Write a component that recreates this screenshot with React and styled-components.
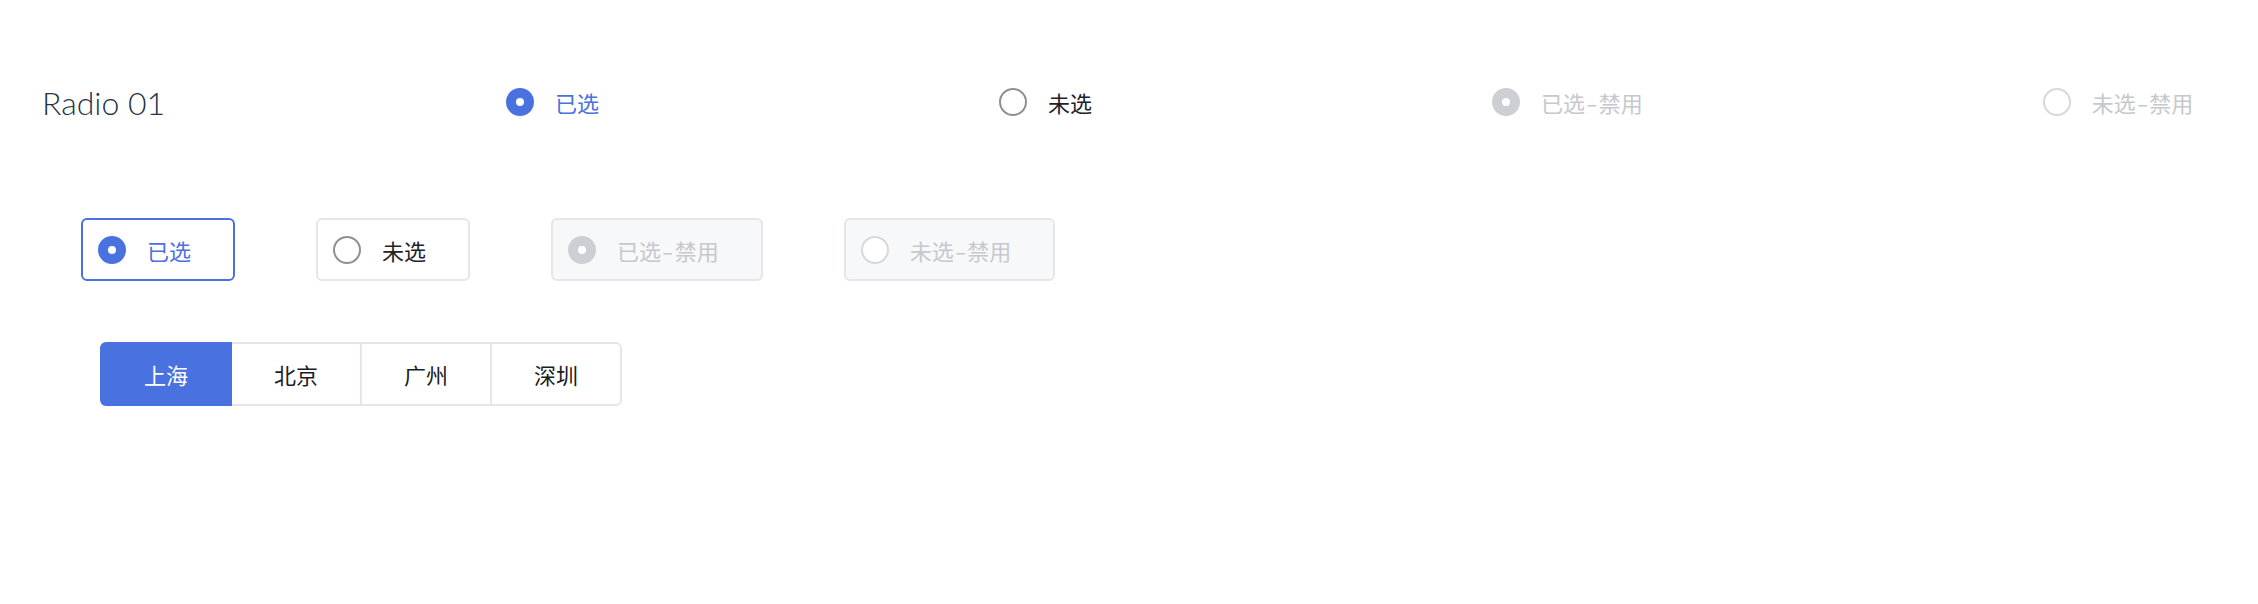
import { useState } from 'react';
import styled, { createGlobalStyle, css } from 'styled-components';

const BLUE = '#4a71e0';

const GlobalStyle = createGlobalStyle`
  body {
    margin: 0;
    background: #ffffff;
    font-family: Lato, "Noto Sans CJK SC", sans-serif;
  }
`;

const Page = styled.div`
  display: flex;
  flex-direction: column;
  align-items: flex-start;
  padding: 72px 0 0 42px;
`;

const Header = styled.div`
  display: flex;
  align-items: center;
  height: 60px;
`;

const Title = styled.h1`
  width: 464px;
  margin: 0;
  font-family: Lato, sans-serif;
  font-weight: 300;
  font-size: 32px;
  color: #24334a;
`;

const States = styled.div`
  display: flex;
  align-items: center;
  gap: 400px;
`;

const Option = styled.label`
  display: flex;
  align-items: center;
  gap: 21px;
  font-size: 22px;
  font-family: "Noto Sans CJK SC", sans-serif;
  color: ${({ $checked, $disabled }) => ($disabled ? '#c6c8cd' : $checked ? BLUE : '#1f2329')};
  cursor: ${({ $disabled }) => ($disabled ? 'not-allowed' : 'pointer')};
`;

// the hyphen in the reference font is wider than Noto's
const Sep = styled.span`
  display: inline-block;
  margin: 0 3px;
  transform: scaleX(1.5);
`;

const Dot = styled.span`
  box-sizing: border-box;
  flex: none;
  width: 28px;
  height: 28px;
  border-radius: 50%;
  background: #fff;
  border: 2px solid ${({ $disabled }) => ($disabled ? '#d6d8dc' : '#8e9096')};

  ${({ $checked, $disabled }) =>
    $checked &&
    css`
      border: 10px solid ${$disabled ? '#cdcfd4' : BLUE};
    `}
`;

const BoxGroup = styled.div`
  display: flex;
  gap: 81px;
  margin: 86px 0 0 39px;
`;

const BoxOption = styled(Option)`
  box-sizing: border-box;
  height: 63px;
  padding: 0 42px 0 15px;
  border-radius: 6px;
  border: 2px solid ${({ $checked, $disabled }) => ($checked && !$disabled ? BLUE : '#e4e6eb')};
  background: ${({ $disabled }) => ($disabled ? '#f7f8fa' : '#fff')};
`;

const Segmented = styled.div`
  display: flex;
  margin: 61px 0 0 58px;
`;

const Segment = styled.button`
  box-sizing: border-box;
  width: 132px;
  height: 64px;
  margin-left: -2px;
  padding: 0;
  border: 2px solid ${({ $active }) => ($active ? BLUE : '#e4e6eb')};
  background: ${({ $active }) => ($active ? BLUE : '#fff')};
  color: ${({ $active }) => ($active ? '#fff' : '#1a1d23')};
  font-family: "Noto Sans CJK SC", sans-serif;
  font-size: 22px;
  cursor: pointer;
  position: relative;
  z-index: ${({ $active }) => ($active ? 1 : 0)};

  &:first-child {
    margin-left: 0;
    border-radius: 6px 0 0 6px;
  }

  &:last-child {
    border-radius: 0 6px 6px 0;
  }
`;

const states = [
  { label: '已选', checked: true, disabled: false },
  { label: '未选', checked: false, disabled: false },
  { label: '已选-禁用', checked: true, disabled: true },
  { label: '未选-禁用', checked: false, disabled: true },
];

const cities = ['上海', '北京', '广州', '深圳'];

const Label = ({ text }) => {
  const [main, rest] = text.split('-');
  return (
    <span>
      {main}
      {rest && (
        <>
          <Sep>-</Sep>
          {rest}
        </>
      )}
    </span>
  );
};

export default function App() {
  const [city, setCity] = useState('上海');

  return (
    <>
      <GlobalStyle />
      <Page>
        <Header>
          <Title>Radio 01</Title>
          <States>
            {states.map(({ label, checked, disabled }) => (
              <Option key={label} $checked={checked} $disabled={disabled}>
                <Dot $checked={checked} $disabled={disabled} />
                <Label text={label} />
              </Option>
            ))}
          </States>
        </Header>

        <BoxGroup>
          {states.map(({ label, checked, disabled }) => (
            <BoxOption key={label} $checked={checked} $disabled={disabled}>
              <Dot $checked={checked} $disabled={disabled} />
              <Label text={label} />
            </BoxOption>
          ))}
        </BoxGroup>

        <Segmented>
          {cities.map(name => (
            <Segment key={name} $active={city === name} onClick={() => setCity(name)}>
              {name}
            </Segment>
          ))}
        </Segmented>
      </Page>
    </>
  );
}
